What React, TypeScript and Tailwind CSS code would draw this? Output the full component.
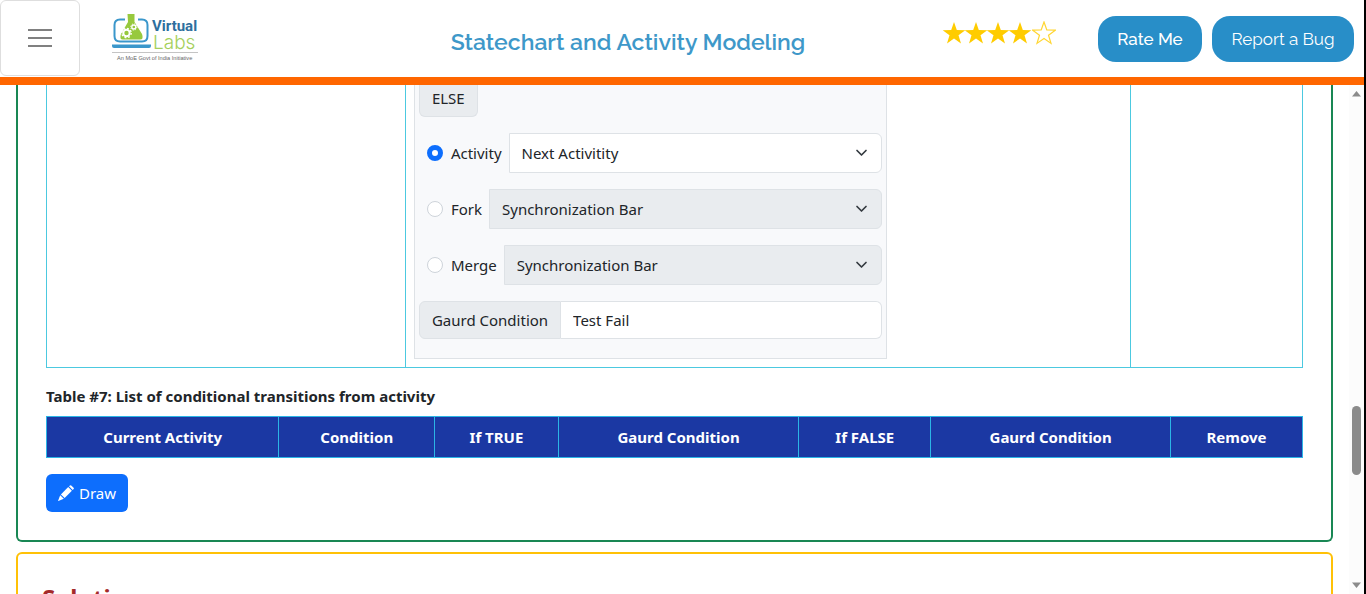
const STAR = 'M12 1 L14.8 9 L23.3 9.2 L16.5 14.3 L19 22.4 L12 17.6 L5 22.4 L7.5 14.3 L0.7 9.2 L9.2 9 Z';

function Logo() {
  return (
    <svg viewBox="0 0 90 50" className="h-[50px] w-[90px]" role="img" aria-label="Virtual Labs">
      <path
        d="M13 5.5 H8 Q2.500 5.500 2.500 11 V22 Q2.500 27.500 8 27.500 H30 Q35.500 27.500 35.500 22 V11 Q35.500 5.500 30 5.500 H26"
        fill="none"
        stroke="#3b97cb"
        strokeWidth="2"
      />
      <path d="M0 30.500 H39 V32 Q39 34 37 34 H2 Q0 34 0 32 Z" fill="#3b97cb" />
      <path d="M15.500 0 H22.500 V8 L30 20 Q32 25.500 28 25.500 H11 Q7 25.500 9 20 L16 8 Z" fill="#97c93d" />
      <circle cx="14.500" cy="19" r="3.200" fill="none" stroke="#fff" strokeWidth="2" />
      <circle cx="14.500" cy="19" r="4.700" fill="none" stroke="#fff" strokeWidth="1.400" strokeDasharray="1.850 1.840" />
      <circle cx="21.800" cy="13" r="2" fill="none" stroke="#fff" strokeWidth="1.300" />
      <circle cx="21.800" cy="13" r="3.100" fill="none" stroke="#fff" strokeWidth="1" strokeDasharray="1.200 1.230" />
      <text x="40" y="17" fill="#2e6f9e" fontSize="15" fontWeight="700" fontFamily="Roboto, sans-serif">
        Virtual
      </text>
      <text x="41" y="34.500" fill="#a5d05b" fontSize="19" fontWeight="300" fontFamily="Inter, sans-serif">
        Labs
      </text>
      <path d="M0 38.500 H86" stroke="#c4c4c4" strokeWidth="1" />
      <text x="5" y="46" fill="#666" fontSize="5.600" fontFamily="Liberation Sans, sans-serif">
        An MoE Govt of India Initiative
      </text>
    </svg>
  );
}

function Stars() {
  return (
    <div className="flex" role="img" aria-label="4 out of 5 stars">
      {[1, 2, 3, 4, 5].map((n) => (
        <svg key={n} viewBox="0 0 24 24" className="-mr-0.5 size-6 last:ml-0.5">
          <path d={STAR} fill={n < 5 ? '#ffcc00' : 'none'} stroke={n < 5 ? 'none' : '#ffd633'} strokeWidth="1.2" />
        </svg>
      ))}
    </div>
  );
}

function Chevron() {
  return (
    <svg viewBox="0 0 16 16" className="pointer-events-none absolute right-3 top-3 size-4">
      <path
        d="m3 5.500 4.500 4.500 4.500-4.500"
        fill="none"
        stroke="#343a40"
        strokeWidth="1.700"
        strokeLinecap="round"
        strokeLinejoin="round"
      />
    </svg>
  );
}

const targets = [
  { id: 'activity', label: 'Activity', value: 'Next Activitity', on: true },
  { id: 'fork', label: 'Fork', value: 'Synchronization Bar', on: false },
  { id: 'merge', label: 'Merge', value: 'Synchronization Bar', on: false },
];

function TargetRow({ id, label, value, on }: (typeof targets)[number]) {
  return (
    <div className="flex h-10 items-center">
      <label className="flex items-center gap-2 pl-2 pr-[7px]">
        <input
          type="radio"
          name="else-target"
          defaultChecked={on}
          className="size-4 appearance-none rounded-full border border-[#ced4da] bg-white checked:border-[5px] checked:border-[#0d6efd]"
        />
        {label}
      </label>
      <div className="relative h-full flex-1">
        <select
          aria-label={label + ' target'}
          id={id}
          disabled={!on}
          className="size-full appearance-none rounded-r-md border border-[#dee2e6] bg-white px-3 text-[#212529] opacity-100 disabled:bg-[#e9ecef]"
        >
          <option>{value}</option>
        </select>
        <Chevron />
      </div>
    </div>
  );
}

const columns = [
  { name: 'Current Activity', width: 'w-[18.500%]' },
  { name: 'Condition', width: 'w-[12.400%]' },
  { name: 'If TRUE', width: 'w-[9.850%]' },
  { name: 'Gaurd Condition', width: 'w-[19.150%]' },
  { name: 'If FALSE', width: 'w-[10.500%]' },
  { name: 'Gaurd Condition', width: 'w-[19.100%]' },
  { name: 'Remove', width: 'w-[10.500%]' },
];

export default function App() {
  return (
    <div className="flex h-screen flex-col overflow-hidden border-r-2 border-black bg-white font-['Noto_Sans',sans-serif] text-[15px] leading-6 text-[#212529]">
      <header className="flex h-[85px] shrink-0 border-b-8 border-[#ff6600] bg-white font-[Raleway,Lato,sans-serif]">
        <button
          type="button"
          aria-label="Menu"
          className="flex h-[76px] w-20 flex-col items-center justify-center gap-[6px] rounded-md border border-[#dedede]"
        >
          <span className="h-0.5 w-6 bg-[#808080]" />
          <span className="h-0.5 w-6 bg-[#808080]" />
          <span className="h-0.5 w-6 bg-[#808080]" />
        </button>
        <div className="ml-8 mt-[14px]">
          <Logo />
        </div>
        <h1 className="flex-1 self-center pl-28 pt-1.5 text-center text-[23px] font-semibold text-[#3e98c9]">
          Statechart and Activity Modeling
        </h1>
        <div className="mr-[44px] mt-[21px]">
          <Stars />
        </div>
        <div className="flex items-center gap-[10px] pr-[10px] text-[17px] text-white">
          <button type="button" className="h-[46px] w-[104px] rounded-[18px] bg-[#288ec8] font-medium">
            Rate Me
          </button>
          <button type="button" className="h-[46px] w-[142px] rounded-[18px] bg-[#288ec8]">
            Report a Bug
          </button>
        </div>
      </header>

      <div className="flex min-h-0 flex-1">
        <main className="flex-1 overflow-hidden px-4">
          <section className="mb-[10px] rounded-b-md border-2 border-t-0 border-[#198754] px-7 pb-7">
            <table className="w-full table-fixed border-separate border-spacing-0 border border-t-0 border-[#4cc9e0]">
              <tbody>
                <tr>
                  <td className="w-[28.600%] border-r border-[#4cc9e0]" />
                  <td className="border-r border-[#4cc9e0] px-2 pb-2">
                    <div className="flex w-[66.800%] flex-col gap-4 border border-t-0 border-[#dee2e6] bg-[#f8f9fb] px-1 pb-[19px]">
                      <div className="flex">
                        <span className="h-8 rounded-b-md border border-t-0 border-[#dee2e6] bg-[#e9ecef] px-3 pt-px">
                          ELSE
                        </span>
                      </div>
                      {targets.map((t) => (
                        <TargetRow key={t.id} {...t} />
                      ))}
                      <div className="flex h-[38px]">
                        <label
                          htmlFor="guard"
                          className="flex items-center rounded-l-md border border-[#dee2e6] bg-[#e9ecef] px-3"
                        >
                          Gaurd Condition
                        </label>
                        <input
                          id="guard"
                          type="text"
                          defaultValue="Test Fail"
                          className="min-w-0 flex-1 rounded-r-md border border-l-0 border-[#dee2e6] bg-white px-3"
                        />
                      </div>
                    </div>
                  </td>
                  <td className="w-[13.600%]" />
                </tr>
              </tbody>
            </table>

            <h2 className="mb-2 mt-4 font-bold">Table #7: List of conditional transitions from activity</h2>
            <table className="w-full table-fixed border-collapse bg-[#1b38a3] text-white">
              <thead>
                <tr>
                  {columns.map((c, i) => (
                    <th key={i} scope="col" className={'border border-[#2bb5e6] p-2 font-bold ' + c.width}>
                      {c.name}
                    </th>
                  ))}
                </tr>
              </thead>
            </table>
            <button
              type="button"
              className="mt-4 flex h-[38px] items-center gap-[5px] rounded-md bg-[#0d6efd] px-3 text-white"
            >
              <svg viewBox="0 0 16 16" className="size-4" fill="currentColor">
                <path d="M11 1.300 12 .4Q12.600-.1 13.200.4L15.600 2.800Q16.100 3.400 15.600 4L14.700 5Z" />
                <path d="M10.200 2.100 13.900 5.800 6.600 13.100 2.900 9.400Z" />
                <path d="M2.200 10.200 5.800 13.800.3 15.900Q0 16 .1 15.700Z" />
              </svg>
              Draw
            </button>
          </section>
          <section className="rounded-md border-2 border-[#ffc107] px-6 py-7">
            <h2 className="text-2xl font-bold text-[#a52a2a]">Solution</h2>
          </section>
        </main>
        <div className="flex w-[15px] shrink-0 flex-col items-center bg-[#fcfcfc] py-[6px]" aria-hidden="true">
          <svg viewBox="0 0 9 6" className="h-[6px] w-[9px]">
            <path d="M0 5.500 4.500 0 9 5.500Z" fill="#8b8b8b" />
          </svg>
          <span className="grow-[308]" />
          <span className="h-[69px] w-[9px] rounded-full bg-[#8b8b8b]" />
          <span className="grow-[107]" />
          <svg viewBox="0 0 9 6" className="h-[6px] w-[9px]">
            <path d="M0 .5 4.500 6 9 .5Z" fill="#8b8b8b" />
          </svg>
        </div>
      </div>
    </div>
  );
}
